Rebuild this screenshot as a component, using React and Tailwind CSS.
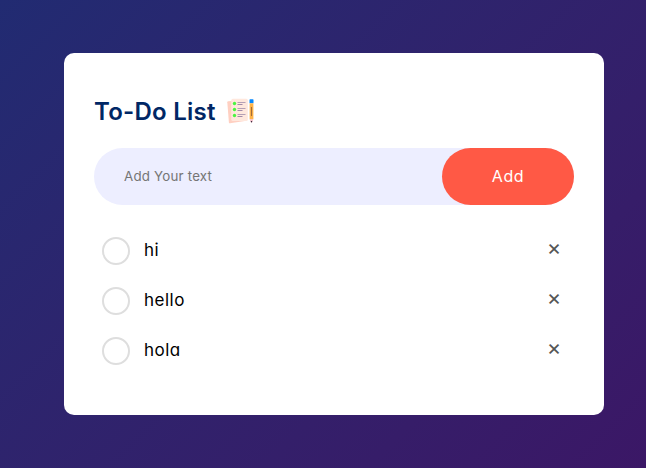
import React from "react";

const tasks = ["hi", "hello", "hola"];

function ListIcon() {
  return (
    <svg width="28" height="28" viewBox="0 0 28 28" className="ml-[11px] shrink-0" aria-hidden="true">
      <path d="M.3 5.200Q.3 4.300 1.200 4.200L17 3l.8 21.100-14.800 2.200Q2 26.400 1.900 25.400Z" fill="#ffd0c2" />
      <rect x="4.300" y="1.700" width="16.500" height="22.300" rx="1.500" fill="#ffe8dd" />
      {[6.5, 12.5, 18.5].map((y) => (
        <g key={y}>
          <circle cx="7.500" cy={y} r="1.700" fill="#4cf441" />
          <path d={`M10.500 ${y - 1}h8`} stroke="#b5a0b5" strokeWidth="1" />
          <path d={`M10.500 ${y + 1}h5`} stroke="#a28ba8" strokeWidth="1" />
        </g>
      ))}
      <rect x="22.500" y="2.300" width="4" height="4" rx=".6" fill="#0788fc" />
      <path d="M22.600 6.300h3.800v16h-3.800z" fill="#ffb347" />
      <path d="M24.500 10v9" stroke="#a16b3b" strokeWidth="1.100" />
      <path d="M22.700 22.300h3.600l-1 3h-1.600z" fill="#f5bec7" />
      <path d="M23.700 24h1.600l-.8 2z" fill="#35263b" />
    </svg>
  );
}

function Task({ label }) {
  return (
    <li className="flex h-[50px] items-center pl-2 pr-[10px]">
      <span className="mt-px size-7 shrink-0 rounded-full border-2 border-[#dedede] bg-white" />
      <span className="ml-3.5 flex-1 text-[17px] leading-6 tracking-[0.5px] text-black [font-feature-settings:'cv11']">
        {label}
      </span>
      <button className="mb-1.5 flex size-5 items-center justify-center text-[22px] leading-5 text-[#555]">
        ×
      </button>
    </li>
  );
}

export default function App() {
  return (
    <div className="h-screen overflow-hidden bg-linear-135 from-[#212b72] to-[#3b1766] pl-16 pt-[53px] font-['Inter',sans-serif]">
      <main className="h-[362px] w-[540px] rounded-[10px] bg-white px-[30px] pt-10">
        <div className="flex h-9 items-center">
          <h2 className="w-[122px] whitespace-nowrap pt-px text-2xl font-semibold tracking-[0.25px] text-[#002765]">
            To-Do List
          </h2>
          <ListIcon />
        </div>
        <div className="mt-[19px] flex h-[57px] rounded-full bg-[#edeeff]">
          <input
            className="min-w-0 flex-1 bg-transparent pl-[30px] text-[13.333px] tracking-[0.2px] text-[#555] outline-none placeholder:text-[#757575]"
            placeholder="Add Your text"
          />
          <button className="w-[132px] rounded-full bg-[#ff5945] pb-0.5 text-base tracking-[0.6px] text-white">Add</button>
        </div>
        <ul className="mt-5">
          {tasks.map((task) => (
            <Task key={task} label={task} />
          ))}
        </ul>
      </main>
    </div>
  );
}
